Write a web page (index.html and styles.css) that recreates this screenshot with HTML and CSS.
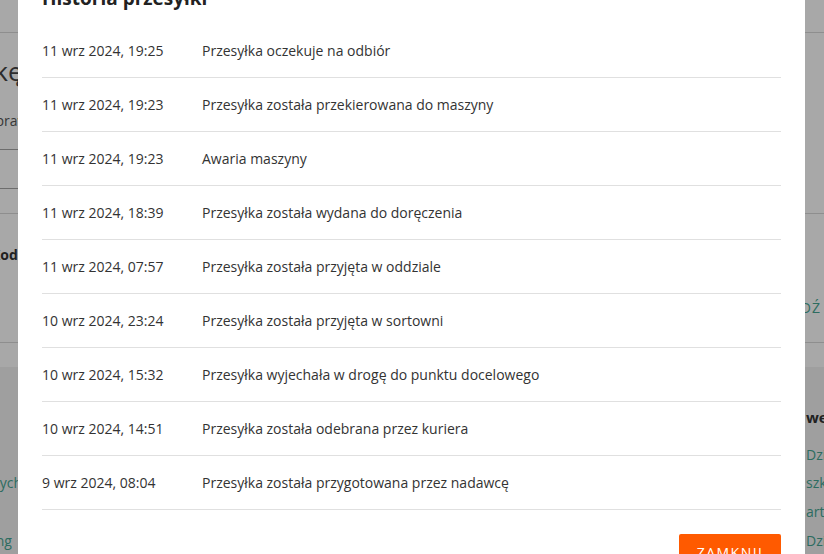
FILE: index.html
```html
<!DOCTYPE html>
<html lang="pl">
<head>
<meta charset="utf-8">
<title>Historia przesyłki</title>
<link rel="stylesheet" href="styles.css">
</head>
<body>
<div class="page">
  <header class="topbar"></header>
  <main class="main">
    <section class="hero">
      <h1 class="hero-title">Śledź paczkę</h1>
      <p class="hero-text">Wpisz numer, aby sprawdzić status swojej przesyłki</p>
      <div class="search-box"></div>
    </section>
    <section class="details">
      <div class="details-label">Kod odbioru</div>
      <div class="details-row">
        <span class="details-value">123 456</span>
        <a class="details-link">Znajdź</a>
      </div>
    </section>
  </main>
  <footer class="footer">
    <div class="footer-cols">
      <div class="footer-col">
        <div class="footer-head">Pomoc</div>
        <a class="footer-link">FAQ</a>
        <a class="footer-link">Cennik usług krajowych</a>
        <a class="footer-link">Kontakt</a>
        <a class="footer-link">Kampanie i marketing</a>
      </div>
      <div class="footer-col footer-col-last">
        <div class="footer-head">weryfikacja</div>
        <a class="footer-link">Dzielnice</a>
        <a class="footer-link">szkody</a>
        <a class="footer-link">artykuły</a>
        <a class="footer-link">Dział prasowy</a>
      </div>
    </div>
  </footer>
</div>

<div class="overlay">
  <div class="modal">
    <h2 class="modal-title">Historia przesyłki</h2>
    <ul class="history">
      <li class="history-row"><span class="history-date">11 wrz 2024, 19:25</span><span class="history-desc">Przesyłka oczekuje na odbiór</span></li>
      <li class="history-row"><span class="history-date">11 wrz 2024, 19:23</span><span class="history-desc">Przesyłka została przekierowana do maszyny</span></li>
      <li class="history-row"><span class="history-date">11 wrz 2024, 19:23</span><span class="history-desc">Awaria maszyny</span></li>
      <li class="history-row"><span class="history-date">11 wrz 2024, 18:39</span><span class="history-desc">Przesyłka została wydana do doręczenia</span></li>
      <li class="history-row"><span class="history-date">11 wrz 2024, 07:57</span><span class="history-desc">Przesyłka została przyjęta w oddziale</span></li>
      <li class="history-row"><span class="history-date">10 wrz 2024, 23:24</span><span class="history-desc">Przesyłka została przyjęta w sortowni</span></li>
      <li class="history-row"><span class="history-date">10 wrz 2024, 15:32</span><span class="history-desc">Przesyłka wyjechała w drogę do punktu docelowego</span></li>
      <li class="history-row"><span class="history-date">10 wrz 2024, 14:51</span><span class="history-desc">Przesyłka została odebrana przez kuriera</span></li>
      <li class="history-row"><span class="history-date">9 wrz 2024, 08:04</span><span class="history-desc">Przesyłka została przygotowana przez nadawcę</span></li>
    </ul>
    <div class="modal-actions">
      <button class="btn-close">Zamknij</button>
    </div>
  </div>
</div>
</body>
</html>
```
FILE: styles.css
```css
* { box-sizing: border-box; }
html, body { margin: 0; padding: 0; height: 100%; }
body {
  font-family: "Open Sans", "Noto Sans", sans-serif;
  color: #333;
  background: #fff;
  overflow: hidden;
}

/* background page */
.page { margin-left: -131px; width: 955px; }
.topbar { height: 33px; border-bottom: 1px solid #d8d8d8; }
.main { padding-bottom: 24px; }
.hero { padding: 21px 0 24px; border-bottom: 1px solid #d8d8d8; }
.hero-title { margin: 0; font-size: 26px; line-height: 34px; font-weight: 400; color: #444; }
.hero-text { margin: 22.6px 0 0; font-size: 14px; line-height: 20px; color: #555; white-space: nowrap; }
.search-box { margin-top: 18px; width: 640px; height: 40px; border: 1px solid #a6a6a6; border-radius: 2px; }

.details { padding: 31px 3px 24px 122px; border-bottom: 1px solid #d8d8d8; font-size: 14px; line-height: 20px; }
.details-label { font-weight: 700; color: #333; }
.details-row { margin-top: 33px; display: flex; justify-content: space-between; }
.details-value { color: #555; padding-left: 60px; }
.details-link { color: #45a592; text-transform: uppercase; letter-spacing: 1px; }

.footer { background: #f2f2f2; padding-top: 39px; height: 300px; }
.footer-cols { display: flex; justify-content: space-between; }
.footer-col { display: flex; flex-direction: column; gap: 8.7px; white-space: nowrap; }
.footer-col-last { width: 18px; }
.footer-head { font-size: 15px; line-height: 22px; font-weight: 700; color: #333; margin-bottom: 8.3px; }
.footer-link { font-size: 14px; line-height: 20px; color: #45a592; }

/* modal */
.overlay {
  position: fixed;
  inset: 0;
  background: rgba(0, 0, 0, 0.34);
  overflow: hidden;
}
.modal {
  margin: -39px 0 0 18px;
  width: 787px;
  background: #fff;
  padding: 24px 24px 24px;
}
.modal-title {
  margin: 0 0 13px;
  font-size: 19px;
  line-height: 26px;
  font-weight: 700;
  color: #222;
}
.history { list-style: none; margin: 0; padding: 0; }
.history-row {
  display: flex;
  padding: 16px 0;
  border-bottom: 1px solid #e0e0e0;
  font-size: 14px;
  line-height: 21px;
  color: #333;
}
.history-date { width: 160px; flex: none; }
.modal-actions { display: flex; justify-content: flex-end; padding-top: 24px; }
.btn-close {
  width: 102px;
  height: 38px;
  border: 0;
  border-radius: 2px;
  background: #ff5a00;
  color: #fff;
  font-family: "Open Sans", "Noto Sans", sans-serif;
  font-size: 14px;
  line-height: 20px;
  letter-spacing: 1.5px;
  text-transform: uppercase;
  padding: 0;
}
```
